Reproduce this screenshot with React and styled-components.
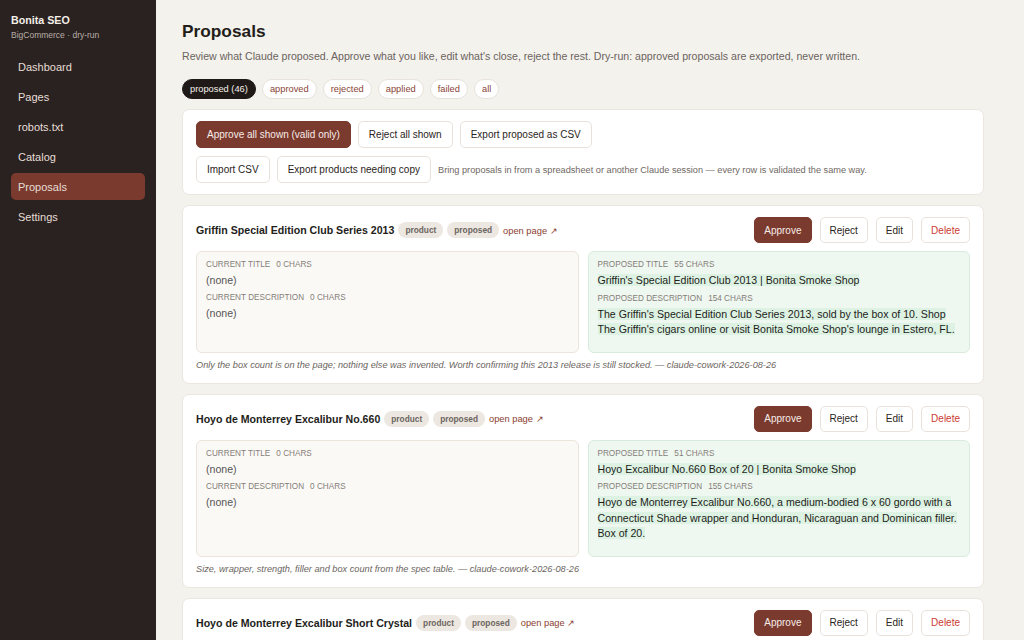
import { useState } from 'react';
import styled, { createGlobalStyle } from 'styled-components';

const Global = createGlobalStyle`
    * { box-sizing: border-box; }
    body {
        margin: 0;
        font-family: "Liberation Sans", Arial, sans-serif;
        background: #f4f2ed;
        color: #231d1a;
    }
`

const NAV = ["Dashboard", "Pages", "robots.txt", "Catalog", "Proposals", "Settings"];
const TABS = ["proposed (46)", "approved", "rejected", "applied", "failed", "all"];

const PROPOSALS = [
    {
        name: "Griffin Special Edition Club Series 2013",
        titleChars: 55,
        descChars: 154,
        title: "Griffin's Special Edition Club 2013 | Bonita Smoke Shop",
        desc: "The Griffin's Special Edition Club Series 2013, sold by the box of 10. Shop The Griffin's cigars online or visit Bonita Smoke Shop's lounge in Estero, FL.",
        note: "Only the box count is on the page; nothing else was invented. Worth confirming this 2013 release is still stocked. — claude-cowork-2026-08-26",
    },
    {
        name: "Hoyo de Monterrey Excalibur No.660",
        titleChars: 51,
        descChars: 155,
        title: "Hoyo Excalibur No.660 Box of 20 | Bonita Smoke Shop",
        desc: "Hoyo de Monterrey Excalibur No.660, a medium-bodied 6 x 60 gordo with a Connecticut Shade wrapper and Honduran, Nicaraguan and Dominican filler. Box of 20.",
        note: "Size, wrapper, strength, filler and box count from the spec table. — claude-cowork-2026-08-26",
    },
    {
        name: "Hoyo de Monterrey Excalibur Short Crystal",
        titleChars: 52,
        descChars: 150,
        title: "Hoyo Excalibur Short Crystal | Bonita Smoke Shop",
        desc: "Hoyo de Monterrey Excalibur Short Crystal, a mild to medium cigar in a glass tube.",
        note: "From the spec table. — claude-cowork-2026-08-26",
    },
];

export default function App() {
    const [ active, setActive ] = useState("Proposals");
    const [ tab, setTab ] = useState(TABS[0]);

    return (
        <Layout>
            <Global />
            <Sidebar>
                <Brand>Bonita SEO</Brand>
                <BrandSub>BigCommerce · dry-run</BrandSub>
                <Nav>
                    {NAV.map((item) => (
                        <NavItem key={item} $active={item === active} onClick={() => setActive(item)}>{item}</NavItem>
                    ))}
                </Nav>
            </Sidebar>
            <Main>
                <Title>Proposals</Title>
                <Lead>Review what Claude proposed. Approve what you like, edit what's close, reject the rest. Dry-run: approved proposals are exported, never written.</Lead>
                <Tabs>
                    {TABS.map((t) => (
                        <Tab key={t} $active={t === tab} onClick={() => setTab(t)}>{t}</Tab>
                    ))}
                </Tabs>
                <Panel>
                    <ButtonRow>
                        <Button $primary>Approve all shown (valid only)</Button>
                        <Button>Reject all shown</Button>
                        <Button>Export proposed as CSV</Button>
                    </ButtonRow>
                    <ButtonRow>
                        <Button>Import CSV</Button>
                        <Button>Export products needing copy</Button>
                        <Hint>Bring proposals in from a spreadsheet or another Claude session — every row is validated the same way.</Hint>
                    </ButtonRow>
                </Panel>
                {PROPOSALS.map((p) => (
                    <Card key={p.name}>
                        <CardHead>
                            <CardTitle>{p.name}</CardTitle>
                            <Badge>product</Badge>
                            <Badge>proposed</Badge>
                            <OpenLink href="#">open page ↗</OpenLink>
                            <Actions>
                                <Button $primary $small>Approve</Button>
                                <Button $small>Reject</Button>
                                <Button $small>Edit</Button>
                                <Button $danger $small>Delete</Button>
                            </Actions>
                        </CardHead>
                        <Compare>
                            <Field>
                                <Label>Current title<Count>0 chars</Count></Label>
                                <Empty>(none)</Empty>
                                <Label>Current description<Count>0 chars</Count></Label>
                                <Empty>(none)</Empty>
                            </Field>
                            <Field $proposed>
                                <Label>Proposed title<Count>{p.titleChars} chars</Count></Label>
                                <Value><Mark>{p.title}</Mark></Value>
                                <Label>Proposed description<Count>{p.descChars} chars</Count></Label>
                                <Value><Mark>{p.desc}</Mark></Value>
                            </Field>
                        </Compare>
                        <Note>{p.note}</Note>
                    </Card>
                ))}
            </Main>
        </Layout>
    )
}

const Layout = styled.div`
    display: flex;
    width: 100vw;
    height: 100vh;
    overflow: hidden;
`
const Sidebar = styled.aside`
    width: 156px;
    flex-shrink: 0;
    background: #2a2220;
    padding: 14px 11px;
    display: flex;
    flex-direction: column;
`
const Brand = styled.div`
    color: #f4efe9;
    font-size: 10.7px;
    font-weight: 700;
    line-height: 13px;
`
const BrandSub = styled.div`
    color: #b8aea8;
    font-size: 8.5px;
    line-height: 11px;
    margin-top: 3px;
`
const Nav = styled.nav`
    margin-top: 12px;
    display: flex;
    flex-direction: column;
    gap: 3px;
`
const NavItem = styled.div`
    height: 27px;
    display: flex;
    align-items: center;
    padding-left: 7px;
    border-radius: 5px;
    font-size: 11px;
    color: #e6ddd6;
    background: ${(p) => (p.$active ? "#7b3a2e" : "transparent")};
    cursor: pointer;
`
const Main = styled.main`
    flex: 1;
    padding: 21px 40px 0 26px;
    overflow: hidden;
`
const Title = styled.h1`
    margin: 0;
    font-size: 17.3px;
    line-height: 20px;
    font-weight: 700;
    color: #231d1a;
`
const Lead = styled.p`
    margin: 9px 0 0;
    font-size: 10.6px;
    line-height: 13px;
    color: #6b635d;
`
const Tabs = styled.div`
    display: flex;
    gap: 6px;
    margin-top: 16px;
`
const Tab = styled.button`
    height: 20px;
    padding: 0 7px;
    border-radius: 10px;
    font-family: inherit;
    font-size: 9.3px;
    border: 1px solid ${(p) => (p.$active ? "#1f1a18" : "#e8e2da")};
    background: ${(p) => (p.$active ? "#1f1a18" : "#ffffff")};
    color: ${(p) => (p.$active ? "#f4efe9" : "#8a4536")};
    cursor: pointer;
`
const Panel = styled.section`
    margin-top: 10px;
    background: #ffffff;
    border: 1px solid #ebe6df;
    border-radius: 7px;
    padding: 11px 13px;
    display: flex;
    flex-direction: column;
    gap: 8px;
`
const ButtonRow = styled.div`
    display: flex;
    align-items: center;
    gap: 7px;
`
const Button = styled.button`
    height: ${(p) => (p.$small ? "26px" : "27px")};
    padding: 0 ${(p) => (p.$small ? "9px" : "10px")};
    border-radius: 5px;
    font-family: inherit;
    font-size: 10px;
    border: 1px solid ${(p) => (p.$primary ? "#7b3a2e" : "#e8e2da")};
    background: ${(p) => (p.$primary ? "#7b3a2e" : "#ffffff")};
    color: ${(p) => (p.$primary ? "#f6ece8" : p.$danger ? "#cc3a32" : "#2a2421")};
    cursor: pointer;
    white-space: nowrap;
`
const Hint = styled.span`
    font-size: 9.2px;
    color: #6f6863;
`
const Card = styled.article`
    margin-top: 10px;
    background: #ffffff;
    border: 1px solid #ebe6df;
    border-radius: 7px;
    padding: 11px 13px 12px;

    & + & {
        margin-top: 10px;
    }
`
const CardHead = styled.div`
    display: flex;
    align-items: center;
    gap: 4px;
`
const CardTitle = styled.h2`
    margin: 0;
    font-size: 10.6px;
    font-weight: 700;
    color: #231d1a;
`
const Badge = styled.span`
    height: 16px;
    padding: 0 7px;
    border-radius: 8px;
    background: #ece7e0;
    color: #6c6560;
    font-size: 8.3px;
    font-weight: 700;
    display: inline-flex;
    align-items: center;
`
const OpenLink = styled.a`
    font-size: 9.3px;
    color: #8a3e30;
    text-decoration: none;
`
const Actions = styled.div`
    margin-left: auto;
    display: flex;
    gap: 8px;
`
const Compare = styled.div`
    margin-top: 8px;
    display: grid;
    grid-template-columns: 1fr 1fr;
    gap: 9px;
`
const Field = styled.div`
    min-height: 101px;
    border-radius: 6px;
    padding: 7px 9px 10px;
    border: 1px solid ${(p) => (p.$proposed ? "#d8ebdd" : "#ebe5dc")};
    background: ${(p) => (p.$proposed ? "#eff7f1" : "#fbf9f6")};
`
const Label = styled.div`
    font-size: 8.2px;
    line-height: 11px;
    text-transform: uppercase;
    color: #857e78;
    margin-bottom: 3px;
`
const Count = styled.span`
    margin-left: 6px;
`
const Empty = styled.div`
    font-size: 10.6px;
    line-height: 15px;
    color: #555;
    margin-bottom: 4px;
`
const Value = styled.div`
    font-size: 10.6px;
    line-height: 15.5px;
    color: #231d1a;
    margin-bottom: 4px;
`
const Mark = styled.span`
    background: #ddf2e3;
`
const Note = styled.p`
    margin: 6px 0 0;
    font-size: 9.2px;
    line-height: 12px;
    font-style: italic;
    color: #6b6560;
`
